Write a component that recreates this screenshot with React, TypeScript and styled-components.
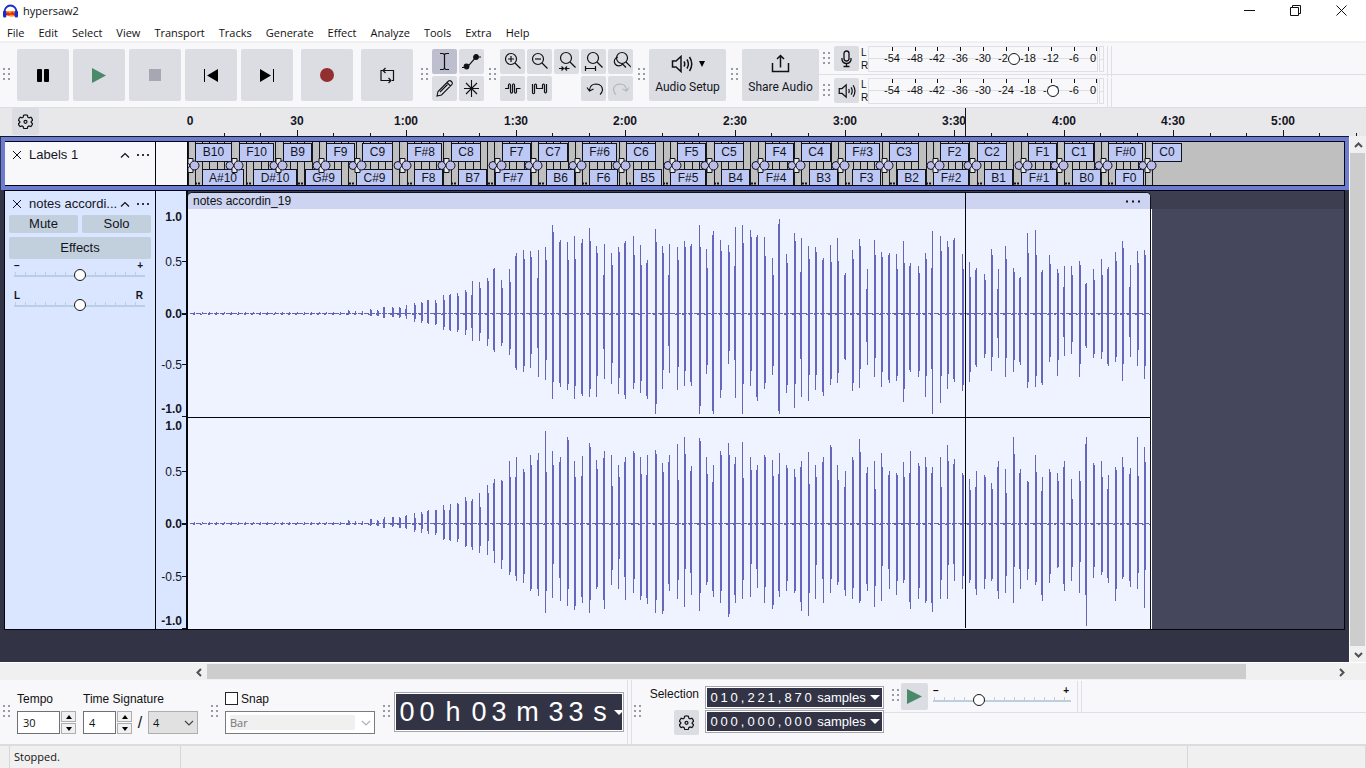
import React from "react";
import styled, { createGlobalStyle } from "styled-components";

const UI = `"Open Sans", "Noto Sans", sans-serif`;
const ARIAL = `"Liberation Sans", Arial, sans-serif`;
const ROBOTO = `Roboto, "Open Sans", sans-serif`;

const Global = createGlobalStyle`
  * { box-sizing: border-box; }
  html, body { margin: 0; }
  body { font: 11px/16px ${UI}; color: #111; background: #f8f8fb; }
  button, input, select { font: inherit; color: inherit; margin: 0; padding: 0; border: 0; border-radius: 0; }
  svg { display: block; }
`;

/* ---------- frame ---------- */
const Window = styled.div`
  display: flex;
  flex-direction: column;
  min-height: 100vh;
  overflow: hidden;
`;
const TitleBar = styled.header`
  display: flex;
  align-items: flex-start;
  height: 23px;
  padding: 0 2px;
  background: #fff;
`;
const LogoBox = styled.span`
  padding-top: 3px;
`;
const Title = styled.h1`
  flex: 1;
  margin: 0;
  padding-left: 4px;
  font: 11px/22px ${UI};
`;
const WindowButton = styled.button`
  display: grid;
  place-items: center;
  width: 46px;
  height: 20px;
  background: none;
`;
const MenuBar = styled.nav`
  display: flex;
  gap: 14px;
  height: 20px;
  padding: 1px 7px 0;
  background: #fff;
  border-bottom: 2px solid #f0f0f0;
`;
const MenuItem = styled.button`
  background: none;
  font: 11px/16px ${UI};
`;

/* ---------- toolbars ---------- */
const Toolbars = styled.div`
  display: flex;
  height: 65px;
  background: #f8f8fb;
  border-bottom: 1px solid #dcdce3;
`;
const GripBox = styled.div<{ $l?: number; $r?: number; $t?: number }>`
  flex: none;
  padding: ${(p) => p.$t ?? 25}px ${(p) => p.$r ?? 3}px 0 ${(p) => p.$l ?? 5}px;
`;
const Grip = (p: { l?: number; r?: number; t?: number }) => (
  <GripBox $l={p.l} $r={p.r} $t={p.t}>
    <svg width="8" height="13" fill="#9a9ba8">
      {[0, 5, 10].map((y) => (
        <React.Fragment key={y}>
          <rect x="0" y={y} width="2" height="2" />
          <rect x="5" y={y} width="2" height="2" />
        </React.Fragment>
      ))}
    </svg>
  </GripBox>
);
const Transport = styled.div`
  display: flex;
  gap: 4px;
  padding-top: 6px;
`;
const ToolButton = styled.button<{ $size?: number; $gap?: number; $on?: boolean }>`
  display: grid;
  place-items: center;
  width: ${(p) => p.$size ?? 25}px;
  height: ${(p) => p.$size ?? 25}px;
  margin-left: ${(p) => p.$gap ?? 0}px;
  background: ${(p) => (p.$on ? "#bdbfcf" : "#dcdde3")};
  border-radius: 2px;
`;
const ToolGrid = styled.div<{ $cols: number }>`
  display: grid;
  grid-template-columns: repeat(${(p) => p.$cols}, 25px);
  grid-auto-rows: 25px;
  gap: 2px;
  padding-top: 6px;
`;
const BigButton = styled.button`
  display: flex;
  flex-direction: column;
  align-items: center;
  justify-content: space-between;
  width: 77px;
  height: 52px;
  margin-top: 6px;
  padding: 4px 0 6px;
  background: #dcdde3;
  border-radius: 2px;
  font: 12px/16px ${ROBOTO};
  color: #14151c;
`;
const IconLine = styled.span`
  display: flex;
  align-items: center;
  gap: 6px;
  height: 22px;
`;
const Meters = styled.div`
  flex: 1;
`;
const MeterRow = styled.div`
  display: flex;
  height: 32px;
  padding-top: 3px;
  border-bottom: 1px solid #dfdfe6;
  &:last-child { border-bottom: 0; }
`;
const Channels = styled.div`
  display: flex;
  flex-direction: column;
  width: 9px;
  padding-left: 2px;
  font: 10px/13px ${ARIAL};
`;
const MeterScale = styled.div`
  position: relative;
  width: 230px;
  height: 26px;
  border: 1px solid #dfdfe6;
`;
const ClipLamp = styled.div`
  width: 5px;
  height: 26px;
  margin-left: 1px;
  border: 1px solid #dfdfe6;
  background: linear-gradient(#dfdfe6, #dfdfe6) 0 12px / 100% 1px no-repeat;
`;
const DoubleRule = styled.div<{ $ml?: number; $h: number }>`
  flex: none;
  width: 5px;
  height: ${(p) => p.$h}px;
  margin-left: ${(p) => p.$ml ?? 3}px;
  border: solid #dfdfe6;
  border-width: 0 1px;
`;
const MeterThumb = styled.input`
  position: absolute;
  inset: 5px 0 auto 0;
  width: 228px;
  height: 13px;
  appearance: none;
  background: none;
  &::-webkit-slider-thumb {
    appearance: none;
    width: 12px;
    height: 12px;
    border: 1px solid #15161f;
    border-radius: 50%;
    background: #fff;
  }
`;
const Range = styled.input<{ $step: number }>`
  display: block;
  width: 100%;
  height: 14px;
  appearance: none;
  background:
    linear-gradient(#bccfe2, #bccfe2) 0 7px / 100% 2px no-repeat,
    repeating-linear-gradient(90deg, #bccfe2 0 1px, transparent 1px ${(p) => p.$step}px) 1px 4px / 100% 4px no-repeat;
  &::-webkit-slider-thumb {
    appearance: none;
    width: 12px;
    height: 12px;
    border: 1px solid #15161f;
    border-radius: 50%;
    background: #fff;
  }
`;

/* ---------- timeline ---------- */
const Timeline = styled.div`
  display: flex;
  height: 28px;
  padding-left: 12px;
  background: #e8e8ea;
`;
const TimelineOptions = styled(ToolButton)`
  width: 27px;
  height: 27px;
  margin-right: 148px;
`;
const TimelineScale = styled.svg`
  flex: 1;
  height: 28px;
  font: bold 12px ${ARIAL};
`;

/* ---------- tracks ---------- */
const Workspace = styled.main`
  display: flex;
  flex: 1;
  background: #f0f0f0;
  border-bottom: 1px solid #fff;
`;
const TrackList = styled.div`
  flex: 1;
  min-width: 0;
  background: #323446;
  border-top: 1px solid #15161f;
`;
const LabelTrack = styled.section`
  display: flex;
  height: 53px;
  margin-left: 1px;
  border: 4px solid #6c7cd2;
  padding: 1px 1px 1px 0;
  background: #05060c;
`;
const WaveTrack = styled.section`
  display: flex;
  height: 440px;
  margin: 0 4px;
  border: 1px solid #05060c;
`;
const Panel = styled.div<{ $bg: string }>`
  display: flex;
  flex-direction: column;
  width: 151px;
  flex: none;
  background: ${(p) => p.$bg};
  border-right: 1px solid #05060c;
  font: 13px/16px ${ARIAL};
  color: #14151c;
`;
const PanelHead = styled.div`
  display: flex;
  align-items: center;
  height: 24px;
  padding: 1px 6px 0 7px;
`;
const PlainButton = styled.button`
  display: grid;
  place-items: center;
  background: none;
`;
const TrackName = styled.span`
  flex: 1;
  min-width: 0;
  margin-left: 7px;
  white-space: nowrap;
`;
const PanelButtons = styled.div`
  display: grid;
  grid-template-columns: 1fr 1fr;
  gap: 4px;
  padding: 0 4px 1px;
`;
const PanelButton = styled.button<{ $wide?: boolean }>`
  grid-column: ${(p) => (p.$wide ? "span 2" : "auto")};
  height: ${(p) => (p.$wide ? 22 : 18)}px;
  background: #c2d0de;
  border-radius: 2px;
`;
const SliderBlock = styled.label`
  display: block;
  padding: 0 10px 8px 9px;
`;
const SliderEnds = styled.span`
  display: flex;
  justify-content: space-between;
  height: 8px;
  padding-right: 2px;
  font: bold 10px/12px ${ARIAL};
`;
const LabelGutter = styled.div`
  width: 32px;
  flex: none;
  background: #f8f8fb;
  border-right: 1px solid #05060c;
`;
const LabelLane = styled.div`
  position: relative;
  flex: 1;
  overflow: hidden;
  background: #bfbfbf;
`;
const LabelArt = styled.svg`
  position: absolute;
  inset: 0;
  width: 100%;
  height: 43px;
`;
const Chip = styled.span<{ $x: number; $w: number; $low?: boolean }>`
  position: absolute;
  left: ${(p) => p.$x}px;
  top: ${(p) => (p.$low ? 27 : 1)}px;
  width: ${(p) => p.$w}px;
  height: 19px;
  border: 1px solid #10131c;
  background: #bec8f4;
  font: 12px/17px ${ARIAL};
  text-align: center;
  color: #14151c;
`;
const Axis = styled.svg`
  flex: none;
  width: 32px;
  height: 438px;
  background: #dae6ff;
  border-right: 2px solid #05060c;
  font: 12px ${ARIAL};
`;
const Lane = styled.div`
  position: relative;
  flex: 1;
  min-width: 0;
  overflow: hidden;
  background: linear-gradient(#3d3e50 18px, #45475c 18px);
`;
const Clip = styled.article`
  width: 963px;
  height: 437px;
  margin-top: 1px;
  border: 1px solid #10131c;
  border-width: 1px 1px 0 0;
  border-radius: 5px 5px 0 0;
  background: #eff2ff;
  overflow: hidden;
`;
const ClipHead = styled.header`
  display: flex;
  align-items: center;
  justify-content: space-between;
  height: 16px;
  padding: 0 9px 0 5px;
  background: #cdd4f1;
  font: 12px/16px ${ARIAL};
`;
const ClipEdge = styled.i`
  position: absolute;
  left: 963px;
  top: 18px;
  width: 1px;
  bottom: 0;
  background: #fff;
`;
const Cursor = styled.i`
  position: absolute;
  left: 777px;
  top: 1px;
  width: 1px;
  bottom: 1px;
  background: #05060c;
`;

/* ---------- scroll bars ---------- */
const VScroll = styled.div`
  display: flex;
  flex-direction: column;
  width: 17px;
  padding-top: 1px;
  border-left: 1px solid #fff;
  background: #f0f0f0;
`;
const HScroll = styled.div`
  display: flex;
  height: 17px;
  padding: 1px 17px 1px 191px;
  background: #f0f0f0;
`;
const ScrollArrow = styled.button`
  display: grid;
  place-items: center;
  flex: none;
  width: 16px;
  height: 16px;
  background: none;
`;
const VThumb = styled.div`
  flex: 1;
  width: 15px;
  background: #cdcdcd;
`;
const HTrack = styled.div`
  display: flex;
  flex: 1;
  height: 15px;
`;
const HThumb = styled.div`
  flex: 12;
  background: #cdcdcd;
`;
const HRest = styled.div`
  flex: 1;
`;

/* ---------- bottom toolbars ---------- */
const Bottom = styled.div`
  display: flex;
  height: 66px;
  background: #f8f8fb;
  border-bottom: 2px solid #dcdce0;
  font: 12px/16px ${ARIAL};
`;
const Field = styled.div<{ $w: number }>`
  display: flex;
  flex-direction: column;
  gap: 4px;
  width: ${(p) => p.$w}px;
  padding-top: 10px;
`;
const FieldLabel = styled.label`
  display: flex;
  align-items: center;
  gap: 3px;
  height: 17px;
  white-space: nowrap;
`;
const FieldRow = styled.div`
  display: flex;
  align-items: center;
  height: 23px;
`;
const TextInput = styled.input<{ $w: number }>`
  width: ${(p) => p.$w}px;
  height: 23px;
  padding-left: 5px;
  border: 1px solid #6e6f78;
  background: #fff;
  font: 11px/20px ${UI};
`;
const Spinner = styled.span`
  display: grid;
  gap: 1px;
  margin-left: 1px;
`;
const SpinButton = styled.button`
  display: grid;
  place-items: center;
  width: 15px;
  height: 11px;
  border: 1px solid #adadb2;
  background: #f0f0f0;
`;
const SelectBox = styled.span<{ $w: number }>`
  position: relative;
  width: ${(p) => p.$w}px;
  svg { position: absolute; right: 4px; top: 9px; pointer-events: none; }
`;
const Select = styled.select`
  width: 100%;
  height: 23px;
  padding-left: 4px;
  appearance: none;
  border: 1px solid #adadb2;
  background: #e1e1e1;
  font: 11px/20px ${UI};
  &:disabled {
    border-color: #7a7a80;
    background: linear-gradient(#f0f0f0, #f0f0f0) 4px 3px / 125px 15px no-repeat, #fff;
    color: #75757a;
    opacity: 1;
  }
`;
const CheckBox = styled.input`
  width: 13px;
  height: 13px;
  appearance: none;
  border: 1px solid #22232b;
  background: #fff;
`;
const Slash = styled.span`
  width: 16px;
  text-align: center;
  font: 16px/23px ${ARIAL};
`;
const TimeBox = styled.div`
  display: flex;
  align-items: center;
  width: 230px;
  height: 40px;
  margin-top: 12px;
  border: 1px solid #a4a5ae;
  background: #323446;
  box-shadow: inset 0 0 0 1px #fff;
  padding-left: 2px;
  font: 27px/38px ${ARIAL};
  color: #fff;
`;
const SampleBox = styled(TimeBox)`
  width: 179px;
  height: 23px;
  margin: 0;
  padding-left: 3px;
  font: 13px/20px ${ARIAL};
`;
const Cell = styled.span<{ $w: number }>`
  flex: none;
  width: ${(p) => p.$w}px;
  text-align: center;
`;
const Selection = styled.div`
  display: grid;
  grid-template-columns: 51px 179px;
  grid-auto-rows: 23px;
  gap: 1px 6px;
  justify-items: end;
  padding-top: 6px;
`;
const SpeedArea = styled.div`
  flex: 1;
`;
const SpeedRow = styled.div`
  display: flex;
  height: 33px;
  padding-top: 1px;
  border-bottom: 1px solid #dfdfe6;
`;
const SpeedButton = styled(ToolButton)`
  width: 27px;
  height: 27px;
  margin-top: 2px;
`;
const SpeedSlider = styled.label`
  width: 138px;
  margin: 4px 0 0 5px;
`;
const StatusBar = styled.footer`
  display: flex;
  height: 22px;
  background: #f0f0f0;
  font: 11px/22px ${UI};
`;
const StatusCell = styled.span<{ $w?: number }>`
  ${(p) => (p.$w ? `width: ${p.$w}px; flex: none;` : "flex: 1;")}
  padding-left: 4px;
  border-right: 1px solid #d7d7da;
`;

/* ---------- data ---------- */
const STEP = 7.308;

type Peak = [number, number];

const LEFT: Peak[] = [
  ...Array.from({ length: 22 }, (): Peak => [1, 1]),
  [3, 2], [2, 2], [2, 2], [4, 3], [3, 3], [6, 5], [6, 4], [6, 5], [8, 6], [10, 9], [11, 10], [13, 11], [13, 12],
  [18, 17], [19, 18], [20, 19], [23, 22], [32, 28], [31, 28], [35, 33], [45, 39], [33, 33], [44, 42], [60, 57],
  [63, 59], [62, 55], [63, 64], [66, 67], [88, 86], [73, 74], [71, 77], [77, 86], [74, 83], [85, 84], [67, 84],
  [69, 66], [60, 71], [66, 81], [72, 86], [77, 76], [68, 80], [53, 86], [84, 101], [67, 76], [69, 60], [66, 77],
  [72, 73], [69, 73], [88, 101], [64, 61], [82, 101], [73, 85], [68, 51], [86, 85], [88, 101], [83, 73], [78, 88],
  [76, 76], [55, 62], [94, 101], [59, 80], [80, 95], [75, 84], [67, 88], [66, 77], [55, 83], [68, 72], [75, 70],
  [40, 47], [63, 78], [74, 75], [44, 52], [73, 64], [61, 74], [60, 70], [59, 68], [72, 89], [50, 59], [47, 64],
  [60, 84], [82, 101], [77, 90], [72, 76], [75, 69], [59, 78], [51, 69], [45, 54], [39, 45], [64, 58], [44, 45],
  [67, 64], [45, 59], [36, 52], [80, 75], [83, 74], [43, 72], [58, 49], [44, 63], [47, 43], [47, 41], [52, 64],
  [30, 35], [44, 45], [54, 46], [46, 53], [61, 49], [72, 68], [48, 44], [62, 53], [63, 66],
];
const RIGHT: Peak[] = [
  ...LEFT.slice(0, 38),
  [26, 24], [24, 27], [30, 30], [38, 32], [44, 40], [43, 46],
  [62, 52], [66, 58], [54, 60], [68, 68], [70, 73], [92, 90], [72, 75], [66, 78], [86, 83], [62, 87], [67, 80],
  [80, 90], [63, 66], [72, 86], [68, 62], [58, 66], [66, 77], [72, 70], [66, 77], [68, 81], [73, 90], [60, 91],
  [68, 68], [79, 76], [86, 84], [57, 72], [85, 88], [66, 62], [58, 74], [72, 80], [80, 94], [66, 80], [81, 76],
  [66, 74], [58, 65], [68, 80], [63, 86], [70, 74], [58, 68], [54, 70], [62, 88], [71, 93], [58, 76], [66, 80],
  [78, 70], [58, 62], [52, 73], [66, 76], [84, 80], [56, 68], [62, 84], [70, 78], [52, 66], [50, 72], [61, 60],
  [72, 86], [60, 76], [66, 80], [56, 89], [66, 76], [78, 76], [64, 58], [50, 66], [44, 60], [52, 72], [48, 66],
  [40, 58], [62, 76], [54, 70], [86, 80], [54, 66], [42, 57], [68, 62], [46, 78], [54, 60], [50, 45], [62, 68],
  [44, 58], [52, 70], [86, 103], [60, 55], [62, 52], [48, 60], [56, 78], [66, 56], [55, 64], [86, 66], [76, 85],
];
const BODY = [0.95, 0.9, 0.8, 0.97, 0.7, 0.85, 0.55, 0.92, 0.75];

const UPPER: [string, number, number][] = [
  ["B10", 195, 37], ["F10", 239, 35], ["B9", 283, 29], ["F9", 326, 29], ["C9", 362, 31], ["F#8", 407, 35],
  ["C8", 451, 30], ["F7", 502, 29], ["C7", 538, 30], ["F#6", 582, 35], ["C6", 626, 30], ["F5", 677, 29],
  ["C5", 714, 30], ["F4", 765, 29], ["C4", 801, 30], ["F#3", 845, 35], ["C3", 889, 30], ["F2", 940, 29],
  ["C2", 977, 30], ["F1", 1028, 29], ["C1", 1064, 30], ["F#0", 1108, 35], ["C0", 1152, 30],
];
const LOWER: [string, number, number][] = [
  ["A#10", 202, 42], ["D#10", 253, 44], ["G#9", 305, 37], ["C#9", 356, 37], ["F8", 414, 29], ["B7", 458, 29],
  ["F#7", 495, 36], ["B6", 546, 29], ["F6", 589, 29], ["B5", 633, 29], ["F#5", 670, 36], ["B4", 721, 29],
  ["F#4", 758, 36], ["B3", 809, 29], ["F3", 852, 29], ["B2", 897, 29], ["F#2", 933, 36], ["B1", 984, 29],
  ["F#1", 1021, 36], ["B0", 1072, 29], ["F0", 1115, 29],
];
const MENUS = ["File", "Edit", "Select", "View", "Transport", "Tracks", "Generate", "Effect", "Analyze", "Tools", "Extra", "Help"];
const DB = ["-54", "-48", "-42", "-36", "-30", "-24", "-18", "-12", "-6", "0"];

/* ---------- drawings ---------- */
const Svg = (p: { s?: number; w?: number; h?: number; children: React.ReactNode; sw?: number; c?: string }) => (
  <svg
    width={p.w ?? p.s ?? 21}
    height={p.h ?? p.s ?? 21}
    fill="none"
    stroke={p.c ?? "#101116"}
    strokeWidth={p.sw ?? 1.2}
  >
    {p.children}
  </svg>
);
const Gear = () => (
  <Svg s={15} sw={1.2}>
    <path d="M5.6 1.300q1.900-.8 3.800 0l.4 1.900 1.200.7 1.900-.6q1.300 1.200 1.700 3l-1.400 1.200v.9l1.400 1.300q-.6 1.800-1.700 2.900l-1.900-.6-1.200.7-.4 1.500q-1.900.7-3.800 0l-.4-1.500-1.200-.7-1.900.6q-1.300-1.200-1.700-2.900L1.800 8.400v-.9L.4 6.300q.6-1.800 1.700-3l1.900.6 1.200-.7z" />
    <circle cx="7.500" cy="7.800" r="1.500" />
  </Svg>
);
const Speaker = ({ s = 22 }: { s?: number }) => (
  <svg width={s} height={s} viewBox="0 0 22 22" fill="none" stroke="#101116" strokeWidth="1.500">
    <path d="M1.500 8v6h3.500l5 4.500V3.500L5 8z" />
    <path d="M13 8.500q1.500 2.500 0 5M16 6.500q2.800 4.500 0 9M18.500 4q4.500 7 0 14" />
  </svg>
);
const Lens = ({ x = 9, y = 8 }: { x?: number; y?: number }) => (
  <>
    <circle cx={x} cy={y} r="5.500" />
    <path d={`M${x + 4} ${y + 4}l5.500 5.500`} />
  </>
);
const Logo = () => (
  <LogoBox>
    <svg width="17" height="16">
      <path d="M4 12V8h9v5q-4 2-9-1z" fill="#ff9a1f" />
      <path d="M4 10.500l2-1.500 2 1.500 2-2 3 2v2l-4-1-2 1-3-.5z" fill="#e8281a" />
      <path d="M2.500 9a6 6.500 0 0 1 12 0" fill="none" stroke="#1c2acb" strokeWidth="1.800" />
      <rect x="1" y="7.500" width="3.400" height="7" rx="1.500" fill="#1c2acb" />
      <rect x="12.600" y="7.500" width="3.400" height="7" rx="1.500" fill="#1c2acb" />
    </svg>
  </LogoBox>
);

const Wave = ({ data, h, mid, seed }: { data: Peak[]; h: number; mid: number; seed: number }) => {
  let thin = "";
  let thick = "";
  data.forEach(([u, d], i) => {
    const x = Math.round(i * STEP - 1);
    if (x < 1) return;
    thin += `M${x} ${mid - u}h1v${u + d}h-1z`;
    const k = BODY[(i * 5 + seed) % BODY.length];
    const k2 = BODY[(i * 7 + 3 + seed) % BODY.length];
    const side = i % 3 === 0 ? -1 : 1;
    if (u > 2) thick += `M${x + side} ${Math.round(mid - u * k)}h1V${Math.round(mid + d * k2)}h-1z`;
  });
  return (
    <svg width="963" height={h} shapeRendering="crispEdges">
      <path d={`M2 ${mid + 0.5}H963`} stroke="#6464b4" strokeDasharray="5 1" />
      <path d={`M5 ${mid + 1.5}H963`} stroke="#6464b4" strokeDasharray="2 5.300" />
      <path d={thin} fill="#6666b6" />
      <path d={thick} fill="#6666c6" />
    </svg>
  );
};

const Meter = ({ name, value, children }: { name: string; value: number; children: React.ReactNode }) => (
  <MeterRow>
    <Grip l={4} r={3} t={6} />
    <ToolButton aria-label={name}>{children}</ToolButton>
    <Channels>
      <span>L</span>
      <span>R</span>
    </Channels>
    <MeterScale>
      <svg width="228" height="24" fontFamily="Liberation Sans, Arial, sans-serif" fontSize="11" fill="#111">
        <path d="M0 11.500H228" stroke="#dfdfe6" />
        {DB.map((t, i) => {
          const x = Math.round(23 + i * 22.7);
          return (
            <g key={t}>
              <rect x={x} y="0" width="1" height="4" />
              <text x={t === "0" ? 227 : x} y="15" textAnchor={t === "0" ? "end" : "middle"}>{t}</text>
            </g>
          );
        })}
      </svg>
      <MeterThumb type="range" min={0} max={1000} defaultValue={value} aria-label={`${name} level`} />
    </MeterScale>
    <ClipLamp />
    <DoubleRule $h={31} />
  </MeterRow>
);

const Dots = () => (
  <svg width="12" height="2" fill="#333440">
    <rect x="0" y="0" width="2" height="2" />
    <rect x="5" y="0" width="2" height="2" />
    <rect x="10" y="0" width="2" height="2" />
  </svg>
);
const PanelTop = ({ name }: { name: string }) => (
  <PanelHead>
    <PlainButton aria-label="Close track">
      <Svg s={10} sw={1}><path d="M1 1l8 8M9 1l-8 8" /></Svg>
    </PlainButton>
    <TrackName>{name}</TrackName>
    <PlainButton aria-label="Collapse">
      <Svg w={17} h={8} sw={1.2}><path d="M1 6.500l4-4 4 4" /></Svg>
    </PlainButton>
    <PlainButton aria-label="Track menu"><Dots /></PlainButton>
  </PanelHead>
);

const AXIS: [string, number, number, boolean][] = [
  ["1.0", 30, -1, true], ["0.5", 75, 70, false], ["0.0", 127, 122, true], ["-0.5", 178, 173, false], ["-1.0", 222, 225, true],
  ["1.0", 239, -1, true], ["0.5", 285, 280, false], ["0.0", 337, 332, true], ["-0.5", 390, 385, false], ["-1.0", 434, 437, true],
];

const Digits = ({ text, w, comma }: { text: string; w: number; comma: number }) => (
  <>
    {text.split("").map((c, i) => (
      <Cell key={i} $w={c === "," ? comma : w}>{c}</Cell>
    ))}
  </>
);
const Arrow = () => (
  <svg width="10" height="5" fill="#fff"><path d="M0 0h10l-5 5z" /></svg>
);
const Spin = () => (
  <Spinner>
    <SpinButton aria-label="Increase"><svg width="6" height="4"><path d="M0 4l3-4 3 4z" /></svg></SpinButton>
    <SpinButton aria-label="Decrease"><svg width="6" height="4"><path d="M0 0l3 4 3-4z" /></svg></SpinButton>
  </Spinner>
);
const ScrollChevron = ({ d }: { d: string }) => <Svg s={9} sw={2} c="#505055"><path d={d} /></Svg>;

export default function App() {
  return (
    <Window>
      <Global />
      <TitleBar>
        <Logo />
        <Title>hypersaw2</Title>
        <WindowButton aria-label="Minimize"><Svg s={11} sw={1}><path d="M0 5.500h11" /></Svg></WindowButton>
        <WindowButton aria-label="Restore"><Svg s={11} sw={1}><path d="M.5 2.500h8v8h-8zM2.500 2.500v-2h8v8h-2" /></Svg></WindowButton>
        <WindowButton aria-label="Close"><Svg s={11} sw={1}><path d="M.5.500l10 10M10.500.500l-10 10" /></Svg></WindowButton>
      </TitleBar>
      <MenuBar>
        {MENUS.map((m) => <MenuItem key={m}>{m}</MenuItem>)}
      </MenuBar>

      <Toolbars>
        <Grip l={3} r={6} />
        <Transport>
          <ToolButton $size={52} aria-label="Pause">
            <svg width="12" height="13"><rect width="5" height="13" rx="1" /><rect x="7" width="5" height="13" rx="1" /></svg>
          </ToolButton>
          <ToolButton $size={52} aria-label="Play"><svg width="14" height="15" fill="#4a8a68"><path d="M0 0l14 7.500-14 7.500z" /></svg></ToolButton>
          <ToolButton $size={52} aria-label="Stop"><svg width="12" height="12" fill="#a5a7b2"><rect width="12" height="12" /></svg></ToolButton>
          <ToolButton $size={52} aria-label="Skip to start"><svg width="14" height="13"><rect width="1" height="13" /><path d="M14 0v13L3 6.500z" /></svg></ToolButton>
          <ToolButton $size={52} aria-label="Skip to end"><svg width="14" height="13"><rect x="13" width="1" height="13" /><path d="M0 0v13l11-6.500z" /></svg></ToolButton>
          <ToolButton $size={52} $gap={4} aria-label="Record"><svg width="14" height="14" fill="#922f2f"><circle cx="7" cy="7" r="7" /></svg></ToolButton>
          <ToolButton $size={52} $gap={4} aria-label="Loop">
            <Svg w={15} h={17} sw={1.2}><path d="M4 3.500H13.500V13.500H12M3 3.500H1V13.500H10.500M5.500 1L3 3.500 5.500 6M8.500 11l2.500 2.500L8.500 16" /></Svg>
          </ToolButton>
        </Transport>
        <Grip l={8} />
        <ToolGrid $cols={2}>
          <ToolButton $on aria-label="Selection tool"><Svg sw={1.2}><path d="M6 2.500h3l1.500 1 1.500-1h3M6 18.500h3l1.500-1 1.500 1h3M10.500 3.500v14" /></Svg></ToolButton>
          <ToolButton aria-label="Envelope tool"><Svg><path d="M1 16.500h5L15 6h5" /><circle cx="5.500" cy="15.500" r="2.300" fill="#101116" /><circle cx="15" cy="6" r="2.300" fill="#101116" /></Svg></ToolButton>
          <ToolButton aria-label="Draw tool"><Svg sw={1.1}><path d="M3 18l1-4.500L14.500 3q1.500-1 3 .5t.5 3L7.500 17zM13 4.500l3.500 3.500M6 14l7.500-7.500" /></Svg></ToolButton>
          <ToolButton aria-label="Multi-tool"><Svg sw={1.1}><path d="M10.500 2v17M3 10.500h15M5 5l11 11M16 5L5 16" /></Svg></ToolButton>
        </ToolGrid>
        <Grip />
        <ToolGrid $cols={5}>
          <ToolButton aria-label="Zoom in"><Svg><Lens /><path d="M6 8h6M9 5v6" /></Svg></ToolButton>
          <ToolButton aria-label="Zoom out"><Svg><Lens /><path d="M6 8h6" /></Svg></ToolButton>
          <ToolButton aria-label="Fit selection"><Svg><Lens x={10} y={7} /><path d="M3 17.500h4.500M9 17.500h4.500M5.500 15.500l2 2-2 2M11 15.500l-2 2 2 2" /></Svg></ToolButton>
          <ToolButton aria-label="Fit project"><Svg><Lens x={10} y={7} /><path d="M2.500 17.500h10M2.500 15v5M12.500 15v5" /></Svg></ToolButton>
          <ToolButton aria-label="Zoom toggle"><Svg><Lens x={12} y={7} /><path d="M8 6a4.500 4.500 0 1 0 4.500 7l3.500 3.500" /></Svg></ToolButton>
          <ToolButton aria-label="Trim outside"><Svg><path d="M3 10.500h3.500V7q1-2.500 2 0v7q1 2.500 2 0V7q1-2.500 2 0v7q1 2.500 2 0v-3.500H18.500" /></Svg></ToolButton>
          <ToolButton aria-label="Silence selection"><Svg><path d="M3.500 6v9q1 1.500 2 0V7q1-2 2 0v3.500h6V7q1-2 2 0v7q1 2 2 0V6" /></Svg></ToolButton>
          <span />
          <ToolButton aria-label="Undo"><Svg><path d="M6.500 12.500q.5-6.500 6.500-6.500 6.500 .500 6.500 6-.500 3-2.500 4.500M4 9.500l2.500 3.500 4-2" /></Svg></ToolButton>
          <ToolButton aria-label="Redo"><Svg c="#b4b5bd"><path d="M16.500 12.500q-.5-6.500-6.500-6.500-6.500 .500-6.500 6 .500 3 2.500 4.500M19 9.500l-2.500 3.500-4-2" /></Svg></ToolButton>
        </ToolGrid>
        <Grip />
        <BigButton>
          <IconLine>
            <Speaker />
            <svg width="6" height="6"><path d="M0 0h6L3 6z" /></svg>
          </IconLine>
          Audio Setup
        </BigButton>
        <Grip />
        <BigButton>
          <IconLine>
            <Svg w={19} h={20} sw={1.5}><path d="M1.500 9v8.500h16V9M9.500 13.500V1.500M6 5L9.500 1.500 13 5" /></Svg>
          </IconLine>
          Share Audio
        </BigButton>
        <Meters>
          <Meter name="Record meter" value={642}>
            <Svg w={13} h={19} sw={1.3}><rect x="4" y="2" width="5" height="10" rx="2.500" /><path d="M2 9v2q1 3.500 4.500 3.500T11 11V9M6.500 14.500V17M3.500 17.500h6" /></Svg>
          </Meter>
          <Meter name="Playback meter" value={826}><Speaker s={18} /></Meter>
        </Meters>
      </Toolbars>

      <Timeline>
        <TimelineOptions aria-label="Timeline options"><Gear /></TimelineOptions>
        <TimelineScale fill="#15161f" shapeRendering="crispEdges">
          {Array.from({ length: 33 }, (_, i) => {
            const x = Math.round(i * 36.53);
            const major = i % 3 === 0;
            const s = i * 10;
            const text = s < 60 ? `${s}` : `${Math.floor(s / 60)}:${s % 60 === 0 ? "00" : s % 60}`;
            return (
              <g key={i}>
                {i > 0 && <rect x={x} y={major ? 22 : 25} width="1" height={major ? 6 : 3} />}
                {major && s <= 300 && <text x={i ? x : 3} y="17" textAnchor="middle">{text}</text>}
              </g>
            );
          })}
          <rect x="778" y="0" width="1" height="28" />
        </TimelineScale>
      </Timeline>

      <Workspace>
        <TrackList>
          <LabelTrack>
            <Panel $bg="#f8f8fb">
              <PanelTop name="Labels 1" />
            </Panel>
            <LabelGutter />
            <LabelLane>
              <LabelArt shapeRendering="crispEdges">
                {Array.from({ length: 133 }, (_, i) => (
                  <rect key={i} x={Math.round(i * STEP - 0.5)} y="0" width="1" height="43" fill="#15181f" />
                ))}
                {UPPER.map(([t, x]) => (
                  <rect key={t} x={x - 192} y="0" width="3" height="43" fill="#c4c4c4" />
                ))}
              </LabelArt>
              {UPPER.map(([t, x, w]) => <Chip key={t} $x={x - 188} $w={w}>{t}</Chip>)}
              {LOWER.map(([t, x, w]) => <Chip key={t} $x={x - 188} $w={w} $low>{t}</Chip>)}
              <LabelArt stroke="#10131c">
                {UPPER.map(([t, x]) => (
                  <g key={t}>
                    <circle cx={x - 197} cy="23.500" r="4" fill="#bcbce8" />
                    <path d={`M${x - 195} 16.500h5v4l-2 3 2 3v4h-5v-4l2-3-2-3z`} fill="#e8e8e8" />
                    <circle cx={x - 188.5} cy="23.500" r="4.500" fill="#bcbce8" />
                  </g>
                ))}
                {LOWER.map(([t, x]) => (
                  <path key={t} d={`M${x - 195} 41.500h6`} strokeWidth="2" strokeDasharray="2 1" />
                ))}
              </LabelArt>
            </LabelLane>
          </LabelTrack>

          <WaveTrack>
            <Panel $bg="#dae6ff">
              <PanelTop name="notes accordi..." />
              <PanelButtons>
                <PanelButton>Mute</PanelButton>
                <PanelButton>Solo</PanelButton>
                <PanelButton $wide>Effects</PanelButton>
              </PanelButtons>
              <SliderBlock>
                <SliderEnds><span>−</span><span>+</span></SliderEnds>
                <Range $step={10} type="range" defaultValue={50} aria-label="Gain" />
              </SliderBlock>
              <SliderBlock>
                <SliderEnds><span>L</span><span>R</span></SliderEnds>
                <Range $step={10} type="range" defaultValue={50} aria-label="Pan" />
              </SliderBlock>
            </Panel>
            <Axis fill="#14151c">
              {AXIS.map(([t, y, tick, b], i) => (
                <g key={i}>
                  <text x="26" y={y} textAnchor="end" fontWeight={b ? 700 : 400}>{t}</text>
                  {tick > 0 && <rect x="26" y={tick} width="5" height={b && t === "0.0" ? 2 : 1} />}
                </g>
              ))}
            </Axis>
            <Lane>
              <Clip>
                <ClipHead>
                  <span>notes accordin_19</span>
                  <Svg w={15} h={3} sw={2}><path d="M0 1.500h2M6 1.500h2M12 1.500h2" /></Svg>
                </ClipHead>
                <Wave data={LEFT} h={208} mid={104} seed={0} />
                <svg width="963" height="1"><rect width="963" height="1" fill="#05060c" /></svg>
                <Wave data={RIGHT} h={212} mid={105} seed={4} />
              </Clip>
              <ClipEdge />
              <Cursor />
            </Lane>
          </WaveTrack>
        </TrackList>
        <VScroll>
          <ScrollArrow aria-label="Scroll up"><ScrollChevron d="M1 6l3.500-3.500L8 6" /></ScrollArrow>
          <VThumb />
          <ScrollArrow aria-label="Scroll down"><ScrollChevron d="M1 3l3.500 3.500L8 3" /></ScrollArrow>
        </VScroll>
      </Workspace>
      <HScroll>
        <ScrollArrow aria-label="Scroll left"><ScrollChevron d="M6 1L2.500 4.500 6 8" /></ScrollArrow>
        <HTrack><HThumb /><HRest /></HTrack>
        <ScrollArrow aria-label="Scroll right"><ScrollChevron d="M3 1l3.500 3.500L3 8" /></ScrollArrow>
      </HScroll>

      <Bottom>
        <Grip l={3} r={6} />
        <Field $w={66}>
          <FieldLabel htmlFor="tempo">Tempo</FieldLabel>
          <FieldRow><TextInput id="tempo" $w={43} defaultValue="30" /><Spin /></FieldRow>
        </Field>
        <Field $w={124}>
          <FieldLabel htmlFor="beats">Time Signature</FieldLabel>
          <FieldRow>
            <TextInput id="beats" $w={33} defaultValue="4" /><Spin />
            <Slash>/</Slash>
            <SelectBox $w={50}>
              <Select aria-label="Beat unit"><option>4</option></Select>
              <Svg w={10} h={6} c="#444"><path d="M1 1l4 4 4-4" /></Svg>
            </SelectBox>
          </FieldRow>
        </Field>
        <Grip l={4} r={6} />
        <Field $w={150}>
          <FieldLabel><CheckBox type="checkbox" />Snap</FieldLabel>
          <SelectBox $w={150}>
            <Select disabled aria-label="Snap to"><option>Bar</option></Select>
            <Svg w={10} h={6} c="#b0b0b5"><path d="M1 1l4 4 4-4" /></Svg>
          </SelectBox>
        </Field>
        <Grip l={8} r={3} />
        <TimeBox>
          <Digits text="00" w={20} comma={0} /><Cell $w={32}>h</Cell>
          <Digits text="03" w={20} comma={0} /><Cell $w={37}>m</Cell>
          <Digits text="33" w={20} comma={0} /><Cell $w={28}>s</Cell>
          <Arrow />
        </TimeBox>
        <DoubleRule $h={64} />
        <Grip l={2} r={6} />
        <Selection>
          <span>Selection</span>
          <SampleBox><Digits text="010,221,870" w={10} comma={7} /><Cell $w={57}>samples</Cell><Arrow /></SampleBox>
          <ToolButton aria-label="Selection options"><Gear /></ToolButton>
          <SampleBox><Digits text="000,000,000" w={10} comma={7} /><Cell $w={57}>samples</Cell><Arrow /></SampleBox>
        </Selection>
        <SpeedArea>
          <SpeedRow>
            <Grip l={8} r={1} t={8} />
            <SpeedButton aria-label="Play at speed"><svg width="15" height="15" fill="#4a8a68"><path d="M0 0l15 7.500-15 7.500z" /></svg></SpeedButton>
            <SpeedSlider>
              <SliderEnds><span>−</span><span>+</span></SliderEnds>
              <Range $step={10} type="range" defaultValue={32} aria-label="Playback speed" />
            </SpeedSlider>
            <DoubleRule $h={31} $ml={6} />
          </SpeedRow>
        </SpeedArea>
      </Bottom>
      <StatusBar>
        <StatusCell $w={10} />
        <StatusCell $w={171}>Stopped.</StatusCell>
        <StatusCell />
        <StatusCell $w={178} />
      </StatusBar>
    </Window>
  );
}
